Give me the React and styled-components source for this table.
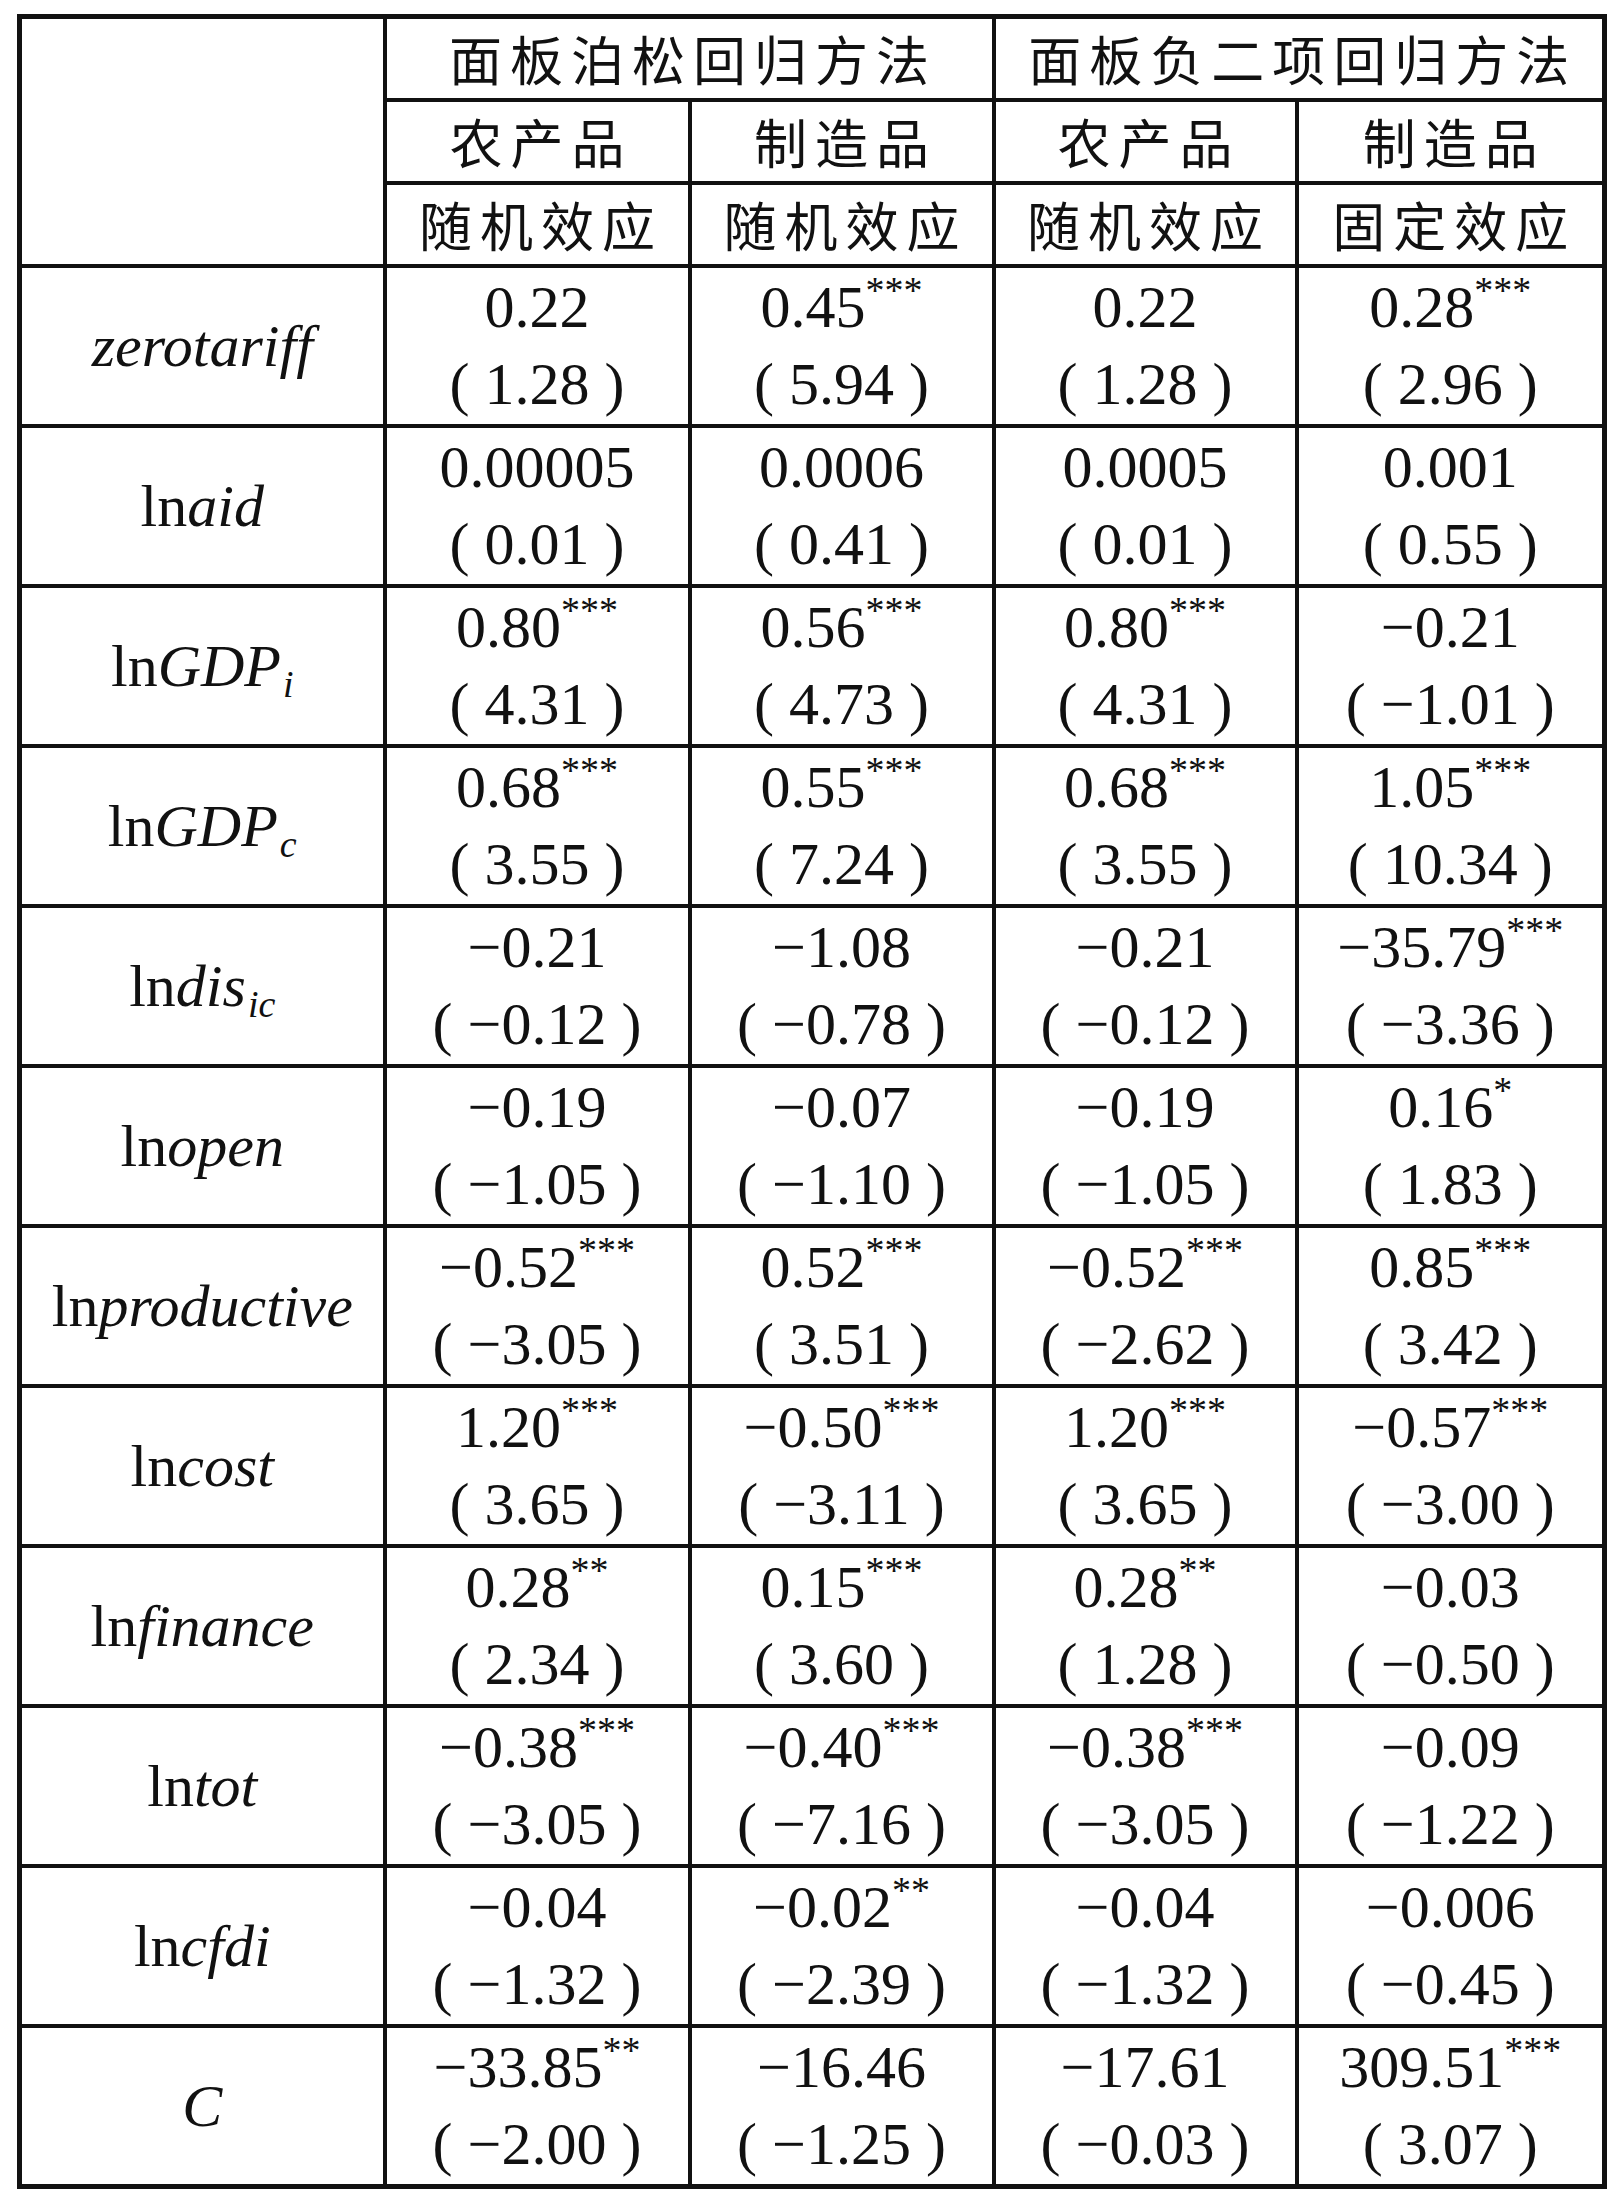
import React from "react";
import styled, { createGlobalStyle } from "styled-components";

const GlobalStyle = createGlobalStyle`
  body {
    margin: 0;
    background: #ffffff;
  }
`;

const Page = styled.div`
  padding: 14px 0 0 17px;
`;

const Table = styled.table`
  border-collapse: collapse;
  table-layout: fixed;
  width: 1585px;
  border: 5px solid #111;
  color: #111;
`;

const HeadCell = styled.th`
  height: 79px;
  padding: 0;
  border: 4px solid #111;
  text-align: center;
  vertical-align: middle;
  font-family: "Noto Sans CJK SC", sans-serif;
  font-weight: 400;
  font-size: 53px;
  line-height: 1;
  letter-spacing: 8px;
  text-indent: 8px;
  white-space: nowrap;
`;

const Cell = styled.td`
  height: ${(p) => p.$h || 156}px;
  padding: 0;
  border: 4px solid #111;
  text-align: center;
  vertical-align: middle;
  font-family: "Liberation Serif", "Times New Roman", serif;
  font-size: 60px;
  white-space: nowrap;
`;

const Label = styled.div`
  line-height: 77px;
`;

const It = styled.i`
  font-style: italic;
`;

const Sub = styled.sub`
  font-size: 38px;
  font-style: italic;
  vertical-align: -11px;
  line-height: 0;
  margin-left: 2px;
`;

const Line = styled.div`
  line-height: 77px;
`;

const Stars = styled.sup`
  font-size: 38px;
  vertical-align: 24px;
  line-height: 0;
`;

const rows = [
  {
    label: <It>zerotariff</It>,
    cells: [["0.22", "", "1.28"], ["0.45", "***", "5.94"], ["0.22", "", "1.28"], ["0.28", "***", "2.96"]],
  },
  {
    label: <>ln<It>aid</It></>,
    cells: [["0.00005", "", "0.01"], ["0.0006", "", "0.41"], ["0.0005", "", "0.01"], ["0.001", "", "0.55"]],
  },
  {
    label: <>ln<It>GDP</It><Sub>i</Sub></>,
    cells: [["0.80", "***", "4.31"], ["0.56", "***", "4.73"], ["0.80", "***", "4.31"], ["−0.21", "", "−1.01"]],
  },
  {
    label: <>ln<It>GDP</It><Sub>c</Sub></>,
    cells: [["0.68", "***", "3.55"], ["0.55", "***", "7.24"], ["0.68", "***", "3.55"], ["1.05", "***", "10.34"]],
  },
  {
    label: <>ln<It>dis</It><Sub>ic</Sub></>,
    cells: [["−0.21", "", "−0.12"], ["−1.08", "", "−0.78"], ["−0.21", "", "−0.12"], ["−35.79", "***", "−3.36"]],
  },
  {
    label: <>ln<It>open</It></>,
    cells: [["−0.19", "", "−1.05"], ["−0.07", "", "−1.10"], ["−0.19", "", "−1.05"], ["0.16", "*", "1.83"]],
  },
  {
    label: <>ln<It>productive</It></>,
    cells: [["−0.52", "***", "−3.05"], ["0.52", "***", "3.51"], ["−0.52", "***", "−2.62"], ["0.85", "***", "3.42"]],
  },
  {
    label: <>ln<It>cost</It></>,
    cells: [["1.20", "***", "3.65"], ["−0.50", "***", "−3.11"], ["1.20", "***", "3.65"], ["−0.57", "***", "−3.00"]],
  },
  {
    label: <>ln<It>finance</It></>,
    cells: [["0.28", "**", "2.34"], ["0.15", "***", "3.60"], ["0.28", "**", "1.28"], ["−0.03", "", "−0.50"]],
  },
  {
    label: <>ln<It>tot</It></>,
    cells: [["−0.38", "***", "−3.05"], ["−0.40", "***", "−7.16"], ["−0.38", "***", "−3.05"], ["−0.09", "", "−1.22"]],
  },
  {
    label: <>ln<It>cfdi</It></>,
    cells: [["−0.04", "", "−1.32"], ["−0.02", "**", "−2.39"], ["−0.04", "", "−1.32"], ["−0.006", "", "−0.45"]],
  },
  {
    label: <It>C</It>,
    cells: [["−33.85", "**", "−2.00"], ["−16.46", "", "−1.25"], ["−17.61", "", "−0.03"], ["309.51", "***", "3.07"]],
  },
];

export default function App() {
  return (
    <Page>
      <GlobalStyle />
      <Table>
        <colgroup>
          <col style={{ width: 365 }} />
          <col style={{ width: 305 }} />
          <col style={{ width: 304 }} />
          <col style={{ width: 303 }} />
          <col style={{ width: 308 }} />
        </colgroup>
        <thead>
          <tr>
            <HeadCell rowSpan={3} />
            <HeadCell colSpan={2}>面板泊松回归方法</HeadCell>
            <HeadCell colSpan={2}>面板负二项回归方法</HeadCell>
          </tr>
          <tr>
            <HeadCell>农产品</HeadCell>
            <HeadCell>制造品</HeadCell>
            <HeadCell>农产品</HeadCell>
            <HeadCell>制造品</HeadCell>
          </tr>
          <tr>
            <HeadCell>随机效应</HeadCell>
            <HeadCell>随机效应</HeadCell>
            <HeadCell>随机效应</HeadCell>
            <HeadCell>固定效应</HeadCell>
          </tr>
        </thead>
        <tbody>
          {rows.map((row, i) => (
            <tr key={i}>
              <Cell>
                <Label>{row.label}</Label>
              </Cell>
              {row.cells.map(([coef, stars, t], j) => (
                <Cell key={j}>
                  <Line>
                    {coef}
                    {stars && <Stars>{stars}</Stars>}
                  </Line>
                  <Line>( {t} )</Line>
                </Cell>
              ))}
            </tr>
          ))}
        </tbody>
      </Table>
    </Page>
  );
}
